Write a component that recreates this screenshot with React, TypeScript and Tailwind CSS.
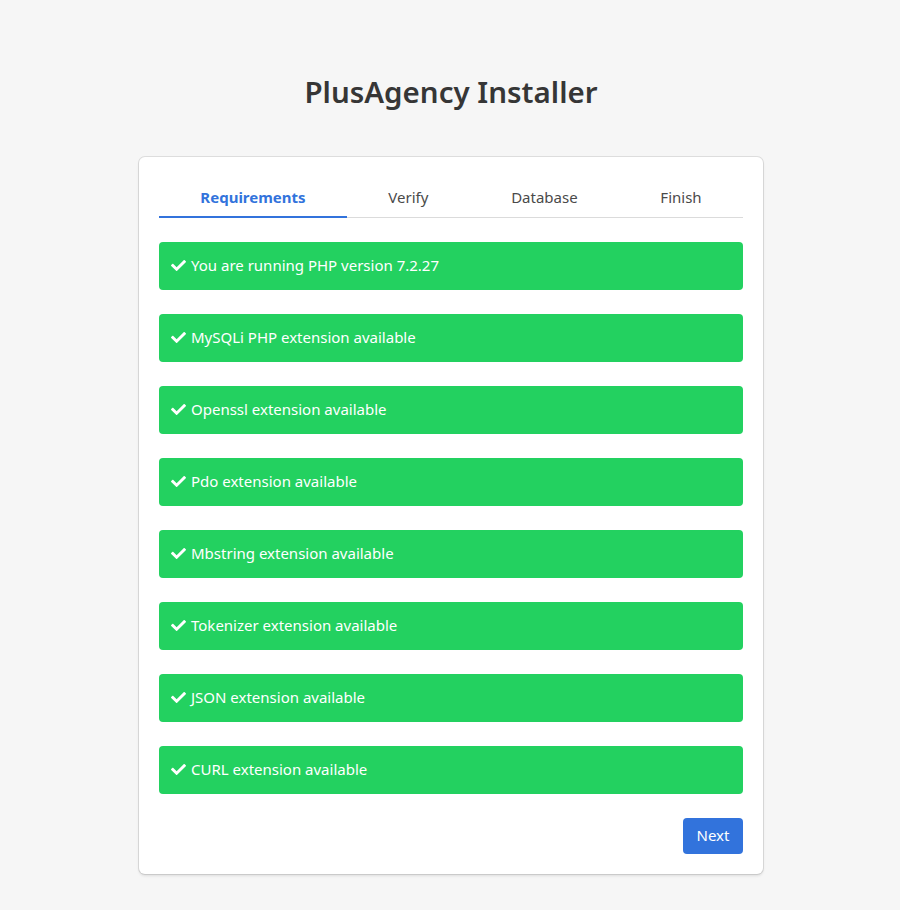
import React, { useState } from "react";

const checks = [
  "You are running PHP version 7.2.27",
  "MySQLi PHP extension available",
  "Openssl extension available",
  "Pdo extension available",
  "Mbstring extension available",
  "Tokenizer extension available",
  "JSON extension available",
  "CURL extension available",
];

const tabs = ["Requirements", "Verify", "Database", "Finish"];

const CheckIcon = () => (
  <svg viewBox="0 0 512 512" className="w-[15px] h-[15px] fill-white shrink-0">
    <path d="M173.9 439.4 7.5 273c-10-10-10-26.2 0-36.2l36.2-36.2c10-10 26.2-10 36.2 0L192 312.7 432.1 72.6c10-10 26.2-10 36.2 0l36.2 36.2c10 10 10 26.2 0 36.2L210.1 439.4c-10 10-26.2 10-36.2 0z" />
  </svg>
);

const App: React.FC = () => {
  const [active] = useState(0);

  return (
    <div className="min-h-screen bg-[#f6f6f6] text-[#363636] font-['Noto_Sans','Open_Sans',sans-serif]">
      <div className="w-[624px] ml-[139px] pt-[72px]">
        <h1 className="text-center text-[29.5px] leading-[40px] font-semibold text-[#363636] mb-[45px]">
          PlusAgency Installer
        </h1>

        <div className="bg-white rounded-md shadow-[0_2px_3px_rgba(10,10,10,0.1),0_0_0_1px_rgba(10,10,10,0.1)] p-5">
          <div className="flex border-b border-[#dbdbdb]">
            {tabs.map((t, i) => (
              <div
                key={t}
                className={
                  i === active
                    ? "flex-auto text-center text-[15px] pt-[9px] pb-[7px] -mb-px border-b-2 border-[#3273dc] text-[#3273dc] font-bold"
                    : "flex-auto text-center text-[15px] pt-[9px] pb-[8px] text-[#4a4a4a]"
                }
              >
                {t}
              </div>
            ))}
          </div>

          <div className="flex flex-col gap-6 mt-6">
            {checks.map((c) => (
              <div key={c} className="h-12 bg-[#23d160] rounded flex items-center gap-[5px] pl-3 text-white text-[15px]">
                <CheckIcon />
                <span>{c}</span>
              </div>
            ))}
          </div>

          <div className="flex justify-end mt-6">
            <button className="h-9 w-[60px] bg-[#3273dc] text-white text-[15px] rounded">Next</button>
          </div>
        </div>
      </div>
    </div>
  );
};

export default App;
